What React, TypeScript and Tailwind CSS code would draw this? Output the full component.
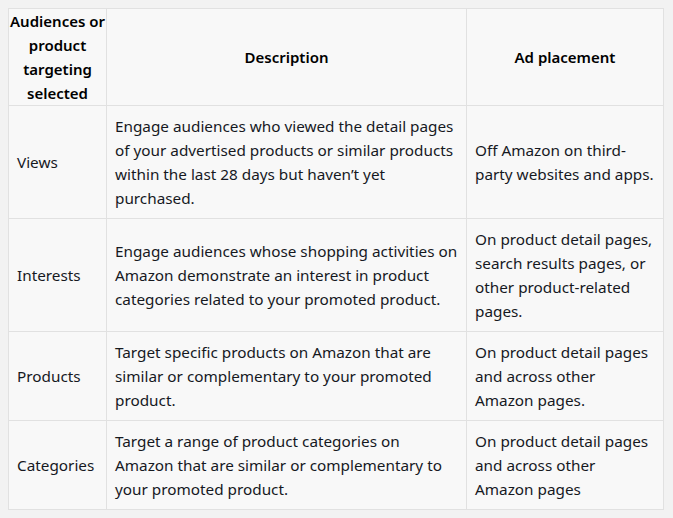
const rows = [
    {
        audience: 'Views',
        description:
            'Engage audiences who viewed the detail pages of your advertised products or similar products within the last 28 days but haven\u2019t yet purchased.',
        placement: 'Off Amazon on third-party websites and apps.',
    },
    {
        audience: 'Interests',
        description:
            'Engage audiences whose shopping activities on Amazon demonstrate an interest in product categories related to your promoted product.',
        placement: 'On product detail pages, search results pages, or other product-related pages.',
    },
    {
        audience: 'Products',
        description: 'Target specific products on Amazon that are similar or complementary to your promoted product.',
        placement: 'On product detail pages and across other Amazon pages.',
    },
    {
        audience: 'Categories',
        description:
            'Target a range of product categories on Amazon that are similar or complementary to your promoted product.',
        placement: 'On product detail pages and across other Amazon pages',
    },
]

const App = () => {
    return (
        <div className="min-h-[518px] w-[673px] bg-[#f2f2f2] p-2 font-['Noto_Sans',sans-serif] text-[15.3px] leading-6 text-[#16191f]">
            <table className="w-[655px] table-fixed border-collapse bg-[#f8f8f8]">
                <colgroup>
                    <col className="w-[98px]" />
                    <col className="w-[360px]" />
                    <col className="w-[197px]" />
                </colgroup>
                <thead>
                    <tr>
                        <th className="border border-[#e1e1e1] px-0 py-0 text-center text-[15px] font-semibold text-black">
                            Audiences or product targeting selected
                        </th>
                        <th className="border border-[#e1e1e1] px-2 py-0 text-center text-[15px] font-semibold text-black">
                            Description
                        </th>
                        <th className="border border-[#e1e1e1] px-2 py-0 text-center text-[15px] font-semibold text-black">
                            Ad placement
                        </th>
                    </tr>
                </thead>
                <tbody>
                    {rows.map(({ audience, description, placement }) => (
                        <tr key={audience}>
                            <td className="border border-[#e1e1e1] py-2 pl-2 pr-1 align-middle">{audience}</td>
                            <td className="border border-[#e1e1e1] px-2 py-2 align-middle">{description}</td>
                            <td className="border border-[#e1e1e1] px-2 py-2 align-middle">{placement}</td>
                        </tr>
                    ))}
                </tbody>
            </table>
        </div>
    )
}

export default App
